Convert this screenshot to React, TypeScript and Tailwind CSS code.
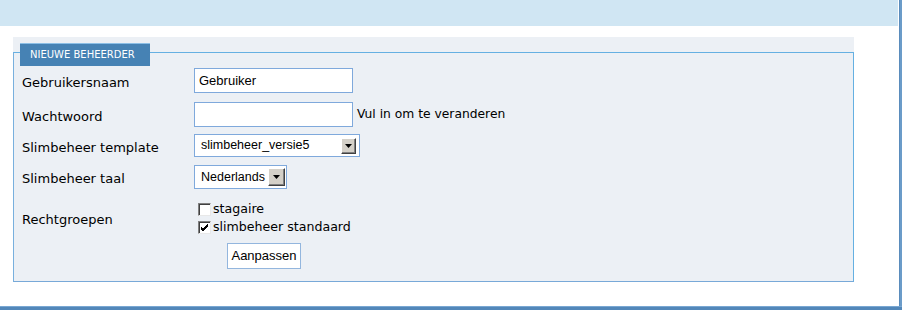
import React from "react";

const verdana = { fontFamily: '"DejaVu Sans", Verdana, sans-serif' };
const arial = { fontFamily: '"Liberation Sans", Arial, sans-serif' };

function DropButton({ w, h }: { w: number; h: number }) {
  return (
    <div
      className="flex items-center justify-center bg-[#d4d0c8] border border-t-[#ffffff] border-l-[#ffffff] border-r-[#404040] border-b-[#404040] shadow-[inset_-1px_-1px_0_#808080]"
      style={{ width: w, height: h }}
    >
      <svg width="7" height="4" viewBox="0 0 7 4">
        <polygon points="0,0 7,0 3.5,4" fill="#000" />
      </svg>
    </div>
  );
}

function CheckBox({ checked }: { checked?: boolean }) {
  return (
    <div className="w-[13px] h-[13px] bg-white border border-t-[#808080] border-l-[#808080] border-r-[#e8e8e8] border-b-[#e8e8e8] shadow-[inset_1px_1px_0_#404040] flex items-center justify-center">
      {checked && (
        <svg width="9" height="9" viewBox="0 0 9 9">
          <path d="M1 4 L3 6 L8 1 M1 5 L3 7 L8 2 M1 6 L3 8 L8 3" stroke="#000" strokeWidth="1" fill="none" />
        </svg>
      )}
    </div>
  );
}

function Label({ children }: { children: React.ReactNode }) {
  return (
    <div className="w-[180px] pl-[8px] pt-[4px] text-[13px] text-black leading-[16px]" style={verdana}>
      {children}
    </div>
  );
}

export default function App() {
  return (
    <div className="w-[902px] h-[310px] flex flex-col bg-white overflow-hidden">
      <div className="flex flex-1">
        <div className="w-[899px] flex flex-col">
          <div className="h-[26px] mr-[1px] bg-[#d0e6f3]" />
          <div className="mt-[11px] ml-[13px] w-[841px] bg-[#ecf0f5] pt-[15px]">
            <div className="border border-[#65b0e2] border-b-[#78a9d8] border-l-[#78b0de] pb-[12px]">
              <div
                className="ml-[6px] -mt-[10px] w-[130px] h-[23px] pl-[10px] bg-[#4682b4] border-t border-[#8cbfe6] text-white text-[10px] leading-[21px] whitespace-nowrap"
                style={verdana}
              >
                NIEUWE BEHEERDER
              </div>

              <div className="mt-[2px] flex items-center">
                <Label>Gebruikersnaam</Label>
                <div
                  className="w-[159px] h-[25px] border border-[#7fa9dc] bg-white pl-[4px] text-[13px] leading-[23px] text-black"
                  style={arial}
                >
                  Gebruiker
                </div>
              </div>

              <div className="mt-[9px] flex items-center">
                <Label>Wachtwoord</Label>
                <div className="w-[159px] h-[25px] border border-[#7fa9dc] bg-white" />
                <span className="ml-[4px] text-[12.3px] text-black" style={verdana}>
                  Vul in om te veranderen
                </span>
              </div>

              <div className="mt-[7px] flex items-center">
                <Label>Slimbeheer template</Label>
                <div className="w-[166px] h-[23px] border border-[#7fa9dc] bg-white flex items-center justify-between pl-[6px] pr-[3px]">
                  <span className="text-[12.5px] text-black" style={arial}>
                    slimbeheer_versie5
                  </span>
                  <DropButton w={15} h={16} />
                </div>
              </div>

              <div className="mt-[8px] flex items-center">
                <Label>Slimbeheer taal</Label>
                <div className="w-[93px] h-[24px] border border-[#7fa9dc] bg-white flex items-center justify-between pl-[6px] pr-[1px]">
                  <span className="text-[12.5px] text-black" style={arial}>
                    Nederlands
                  </span>
                  <DropButton w={17} h={18} />
                </div>
              </div>

              <div className="mt-[11px] flex items-center">
                <Label>Rechtgroepen</Label>
                <div className="flex flex-col">
                  <div className="h-[18px] flex items-center pl-[4px]">
                    <CheckBox />
                    <span className="ml-[2px] text-[12.6px] text-black" style={verdana}>
                      stagaire
                    </span>
                  </div>
                  <div className="h-[18px] flex items-center pl-[4px]">
                    <CheckBox checked />
                    <span className="ml-[2px] text-[12.6px] text-black" style={verdana}>
                      slimbeheer standaard
                    </span>
                  </div>
                </div>
              </div>

              <div className="mt-[7px] flex">
                <div className="ml-[213px] w-[74px] h-[26px] border border-[#93b6de] bg-white flex items-center justify-center text-[13px] text-black" style={arial}>
                  Aanpassen
                </div>
              </div>
            </div>
          </div>
        </div>
        <div className="w-[3px] bg-[#6b9cc9] border-l border-[#5a8cbc]" />
      </div>
      <div className="h-[4px] bg-[#5287b9] border-t border-[#79a7d2]" />
    </div>
  );
}
